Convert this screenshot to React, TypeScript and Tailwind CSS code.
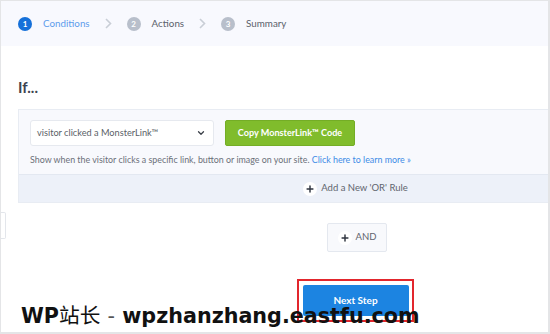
import { ChevronDown, Plus } from 'lucide-react';

const font = { fontFamily: 'Lato, "Open Sans", sans-serif' };

function Step({ n, label, active }: { n: number; label: string; active?: boolean }) {
  return (
    <div className="flex items-center gap-[11px]">
      <div
        className={`w-[14px] h-[14px] rounded-full flex items-center justify-center text-[8px] font-bold text-white ${
          active ? 'bg-[#1570d9]' : 'bg-[#b8bfcb]'
        }`}
      >
        {n}
      </div>
      <span className={`text-[9.8px] ${active ? 'text-[#5d9cec]' : 'text-[#5b616b]'}`}>{label}</span>
    </div>
  );
}

function Chevron() {
  return (
    <svg width="7" height="11" viewBox="0 0 7 11" className="mx-[15px]">
      <polyline points="1,1 5.5,5.5 1,10" fill="none" stroke="#c9ced6" strokeWidth="1.6" />
    </svg>
  );
}

function PlusDot() {
  return (
    <span className="w-[14px] h-[14px] rounded-full bg-white flex items-center justify-center">
      <Plus className="w-[10px] h-[10px] text-[#2f3540]" strokeWidth={3.5} />
    </span>
  );
}

export default function App() {
  return (
    <div
      className="relative w-[550px] h-[334px] overflow-hidden bg-white border-t border-l border-r-2 border-b-2 border-[#e4e5e7]"
      style={font}
    >
      {/* steps */}
      <div className="h-[45px] bg-[#f8f9fe] flex items-center pl-[17px]">
        <Step n={1} label="Conditions" active />
        <Chevron />
        <Step n={2} label="Actions" />
        <Chevron />
        <Step n={3} label="Summary" />
      </div>

      <div className="pl-[17px] pt-[31px] w-[682px]">
        <h1 className="text-[15px] font-bold text-[#3d4450] leading-[20px]">If...</h1>

        {/* rule box */}
        <div className="mt-[12px] border border-[#e8ecf3]">
          <div className="bg-[#f8f9fd] px-[11px] pt-[10px] h-[64px]">
            <div className="flex gap-[11px]">
              <div className="w-[184px] h-[26px] bg-white border border-[#e6e9ef] rounded-[3px] flex items-center justify-between pl-[6px] pr-[7px]">
                <span className="text-[9.2px] text-[#5a5f68]">visitor clicked a MonsterLink™</span>
                <ChevronDown className="w-[10px] h-[10px] text-[#3a3f48]" strokeWidth={3} />
              </div>
              <div className="w-[130px] h-[26px] bg-[#80bc2c] border border-[#74ad26] rounded-[2px] flex items-center justify-center">
                <span className="text-[9.1px] font-bold text-white">Copy MonsterLink™ Code</span>
              </div>
            </div>
            <p className="mt-[8px] text-[8.9px] text-[#6b7079] leading-[12px] whitespace-nowrap">
              Show when the visitor clicks a specific link, button or image on your site.{' '}
              <span className="text-[#3d8be6]">Click here to learn more »</span>
            </p>
          </div>
          <div className="h-[28px] bg-[#edf1f9] border-t border-[#e3e8f1] flex items-center justify-center gap-[4px] pl-[10px]">
            <PlusDot />
            <span className="text-[9.5px] text-[#5f656e]">Add a New 'OR' Rule</span>
          </div>
        </div>
      </div>

      {/* AND row */}
      <div className="flex items-start mt-[9px]">
        <div className="w-[5px] h-[27px] border-y border-r border-[#e3e6eb] rounded-r-[2px] bg-white" />
        <div className="ml-[321px] mt-[11px] w-[60px] h-[29px] bg-[#f8f9fc] border border-[#e4e8ef] rounded-[2px] flex items-center justify-center gap-[4px]">
          <PlusDot />
          <span className="text-[9.5px] text-[#5f656e]">AND</span>
        </div>
      </div>

      {/* next step */}
      <div className="ml-[296px] mt-[27px] w-[117px] h-[43px] border-2 border-[#e2262d] flex items-center justify-center">
        <div className="w-[106px] h-[31px] bg-[#1c84e1] rounded-[2px] flex items-center justify-center">
          <span className="text-[10px] font-bold text-white">Next Step</span>
        </div>
      </div>

      {/* watermark */}
      <div
        className="absolute left-[20px] top-[300px] text-[20.7px] font-bold text-[#111] leading-[30px] whitespace-nowrap"
        style={{ fontFamily: '"DejaVu Sans", "Noto Sans CJK SC", sans-serif' }}
      >
        WP<span className="font-normal">站长</span> <span className="font-normal text-[#555]">-</span> wpzhanzhang.eastfu.com
      </div>
    </div>
  );
}
